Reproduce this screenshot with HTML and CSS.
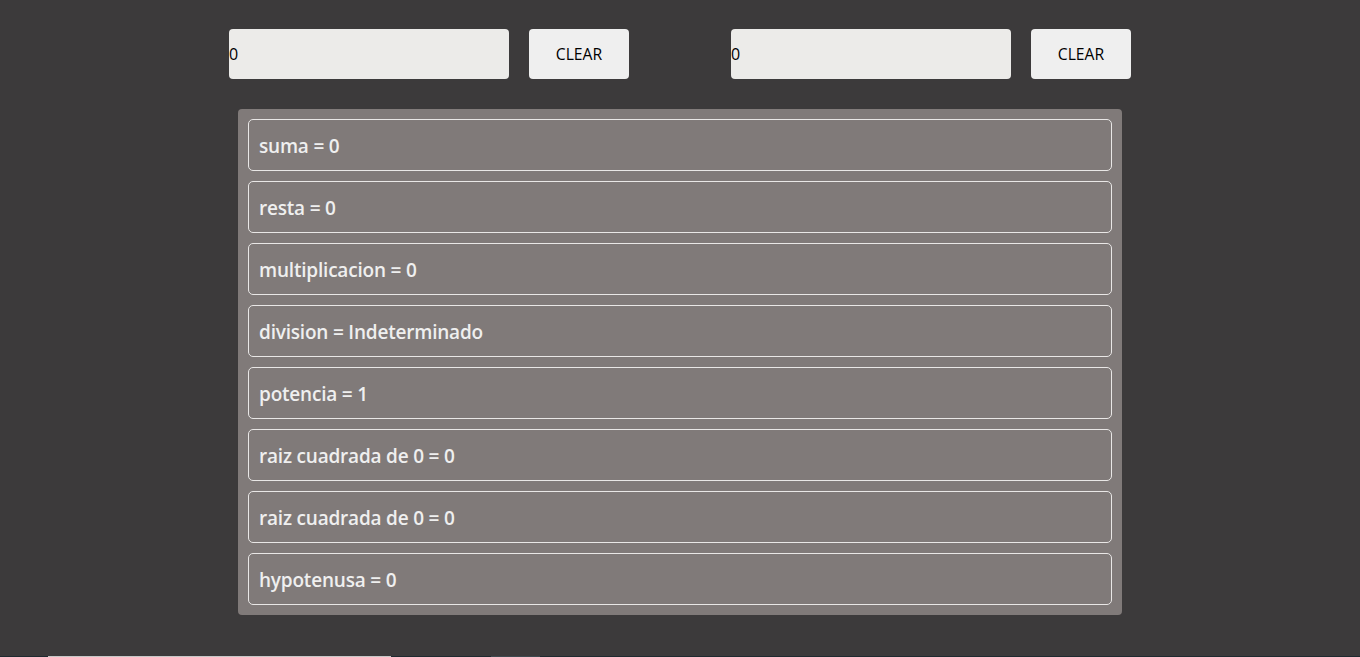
FILE: index.html
```html
<!DOCTYPE html>
<html>
<head>
<meta charset="utf-8">
<link rel="stylesheet" href="styles.css">
</head>
<body>
<div class="page">
  <div class="controls">
    <div class="group">
      <input class="num" type="text" value="0">
      <button class="clear">CLEAR</button>
    </div>
    <div class="group">
      <input class="num" type="text" value="0">
      <button class="clear">CLEAR</button>
    </div>
  </div>
  <div class="results">
    <div class="row">suma = 0</div>
    <div class="row">resta = 0</div>
    <div class="row">multiplicacion = 0</div>
    <div class="row">division = Indeterminado</div>
    <div class="row">potencia = 1</div>
    <div class="row">raiz cuadrada de 0 = 0</div>
    <div class="row">raiz cuadrada de 0 = 0</div>
    <div class="row">hypotenusa = 0</div>
  </div>
</div>
<div class="strip">
  <span class="s1"></span><span class="s2"></span><span class="s3"></span><span class="s4"></span><span class="s5"></span>
</div>
</body>
</html>
```

FILE: styles.css
```css
html, body {
  margin: 0;
  padding: 0;
  background: #3c3a3b;
  height: 100%;
  overflow: hidden;
}
.page {
  display: flex;
  flex-direction: column;
  align-items: center;
  padding-top: 29px;
  font-family: "Open Sans", sans-serif;
}
.controls {
  width: 902px;
  display: flex;
  justify-content: space-between;
}
.group {
  display: flex;
  gap: 20px;
}
.num {
  width: 280px;
  height: 50px;
  box-sizing: border-box;
  border: none;
  border-radius: 4px;
  background: #ecebe9;
  padding: 0;
  margin: 0;
  font-family: "Open Sans", sans-serif;
  font-size: 16px;
  color: #000;
  outline: none;
}
.clear {
  width: 100px;
  height: 50px;
  border: none;
  border-radius: 4px;
  background: #efefef;
  font-family: "Open Sans", sans-serif;
  font-size: 15.7px;
  color: #000;
  padding: 0;
  margin: 0;
}
.results {
  margin-top: 30px;
  width: 884px;
  box-sizing: border-box;
  background: #807a79;
  border-radius: 4px;
  padding: 10px;
  display: flex;
  flex-direction: column;
  gap: 10px;
}
.row {
  height: 52px;
  box-sizing: border-box;
  border: 1px solid #e9e7e6;
  border-radius: 5px;
  padding-left: 10px;
  padding-top: 2px;
  display: flex;
  align-items: center;
  color: #efefef;
  font-weight: 600;
  font-size: 19px;
  letter-spacing: -0.2px;
}
.strip {
  position: fixed;
  left: 0;
  right: 0;
  bottom: 0;
  height: 1px;
  display: flex;
  background: #1f2a30;
}
.strip span { display: block; height: 1px; }
.s1 { width: 48px; background: #1f2a30; }
.s2 { width: 343px; background: #c8c8c8; }
.s3 { width: 100px; background: #1f2a30; }
.s4 { width: 49px; background: #3e4a50; }
.s5 { flex: 1; background: #1f2a30; }
```
